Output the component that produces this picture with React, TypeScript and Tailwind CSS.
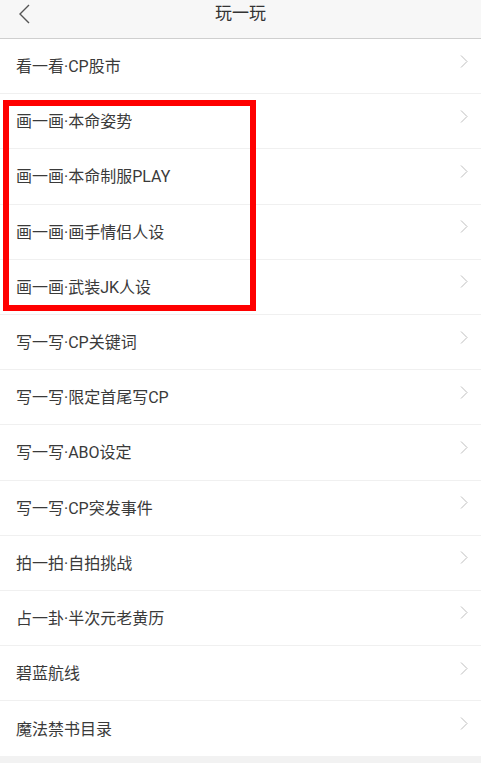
import React from 'react';

const items = [
  '看一看·CP股市',
  '画一画·本命姿势',
  '画一画·本命制服PLAY',
  '画一画·画手情侣人设',
  '画一画·武装JK人设',
  '写一写·CP关键词',
  '写一写·限定首尾写CP',
  '写一写·ABO设定',
  '写一写·CP突发事件',
  '拍一拍·自拍挑战',
  '占一卦·半次元老黄历',
  '碧蓝航线',
  '魔法禁书目录',
];

const font = { fontFamily: '"Roboto", "Noto Sans CJK SC", sans-serif' };

export default function App() {
  return (
    <div className="w-[481px] h-[763px] bg-[#f2f2f2] overflow-hidden relative" style={font}>
      <div className="h-[39px] bg-[#f7f7f7] border-b border-[#cfcfcf] flex items-center relative">
        <svg className="absolute left-[18px] top-[4px]" width="13" height="20" viewBox="0 0 13 20">
          <path d="M11 1 L2 10 L11 19" fill="none" stroke="#555" strokeWidth="1.4" />
        </svg>
        <div className="flex-1 text-center text-[17px] text-[#333] -mt-[10px]">玩一玩</div>
      </div>
      <div className="bg-white">
        {items.map((t, i) => (
          <div
            key={t}
            className={`h-[55.2px] flex items-center justify-between pl-4 pr-[13px] ${i < items.length - 1 ? 'border-b border-[#f0f0f0]' : ''}`}
          >
            <span className="text-[16px] text-[#3a3a3a] mt-[2px]">{t}</span>
            <svg className="-mt-[10px]" width="8" height="13" viewBox="0 0 8 13">
              <path d="M1 0.5 L7 6.5 L1 12.5" fill="none" stroke="#bdbdbd" strokeWidth="1" />
            </svg>
          </div>
        ))}
      </div>
      <div className="absolute left-[3px] top-[100px] w-[253px] h-[211px] border-[6px] border-[#ff0000]" />
    </div>
  );
}
